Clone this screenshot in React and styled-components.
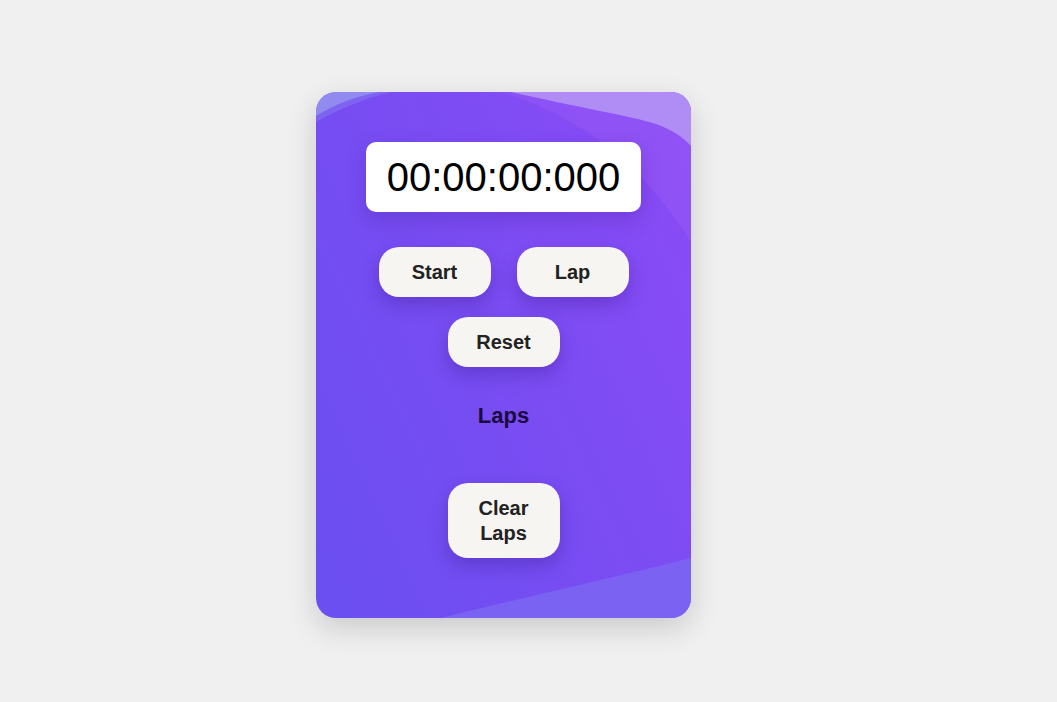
import styled, { createGlobalStyle } from "styled-components";

const GlobalStyle = createGlobalStyle`
  html, body {
    margin: 0;
    padding: 0;
    background: #f0f0f0;
    font-family: "Liberation Sans", Arial, sans-serif;
  }
`;

const Page = styled.div`
  height: 702px;
  display: flex;
  justify-content: center;
  align-items: flex-start;
  padding-top: 92px;
  box-sizing: border-box;
`;

const Card = styled.div`
  position: relative;
  width: 375px;
  height: 526px;
  margin-right: 50px;
  border-radius: 20px;
  overflow: hidden;
  background: linear-gradient(65deg, #6a4ff1 0%, #764df2 40%, #8c4bf6 100%);
  box-shadow: 0 10px 30px rgba(0, 0, 0, 0.16);
  display: flex;
  flex-direction: column;
  align-items: center;
  padding-top: 50px;
  box-sizing: border-box;
`;

const Waves = styled.svg`
  position: absolute;
  inset: 0;
  width: 100%;
  height: 100%;
  pointer-events: none;
`;

const Content = styled.div`
  position: relative;
  display: flex;
  flex-direction: column;
  align-items: center;
`;

const Display = styled.div`
  width: 275px;
  height: 70px;
  background: #fff;
  border-radius: 10px;
  display: flex;
  align-items: center;
  justify-content: center;
  font-size: 40px;
  color: #000;
  box-shadow: 0 8px 20px rgba(60, 20, 140, 0.25);
`;

const Row = styled.div`
  display: flex;
  gap: 26px;
  margin-top: ${({ top }) => top}px;
`;

const Button = styled.button`
  width: 112px;
  height: ${({ tall }) => (tall ? 75 : 50)}px;
  border: none;
  border-radius: 20px;
  background: #f7f5f2;
  color: #222;
  font-family: "Liberation Sans", Arial, sans-serif;
  font-weight: bold;
  font-size: 20px;
  line-height: 25px;
  padding: 0 28px;
  box-shadow: 0 8px 18px rgba(50, 20, 130, 0.3);
  cursor: pointer;
`;

const Title = styled.h2`
  margin: 36px 0 0;
  font-size: 22px;
  line-height: 25px;
  font-weight: bold;
  color: #1a0b40;
`;

export default function App() {
  return (
    <>
      <GlobalStyle />
      <Page>
        <Card>
          <Waves viewBox="0 0 375 526" preserveAspectRatio="none">
            <path d="M0 24 C20 12 40 4 64 0 L0 0 Z" fill="#9aa0ee" opacity="0.75" />
            <path d="M0 30 C25 16 50 6 75 0 L64 0 C40 4 20 12 0 24 Z" fill="#8a86f0" opacity="0.4" />
            <path d="M185 0 C250 20 320 60 375 150 L375 0 Z" fill="#9a5cf7" opacity="0.45" />
            <path d="M195 0 C260 15 315 24 340 32 C356 38 366 44 375 54 L375 0 Z" fill="#b493f5" opacity="0.9" />
            <path d="M125 526 C210 505 300 485 375 466 L375 526 Z" fill="#7b66f2" opacity="0.85" />
          </Waves>
          <Content>
            <Display>00:00:00:000</Display>
            <Row top={35}>
              <Button>Start</Button>
              <Button>Lap</Button>
            </Row>
            <Row top={20}>
              <Button>Reset</Button>
            </Row>
            <Title>Laps</Title>
            <Row top={55}>
              <Button tall>Clear Laps</Button>
            </Row>
          </Content>
        </Card>
      </Page>
    </>
  );
}
